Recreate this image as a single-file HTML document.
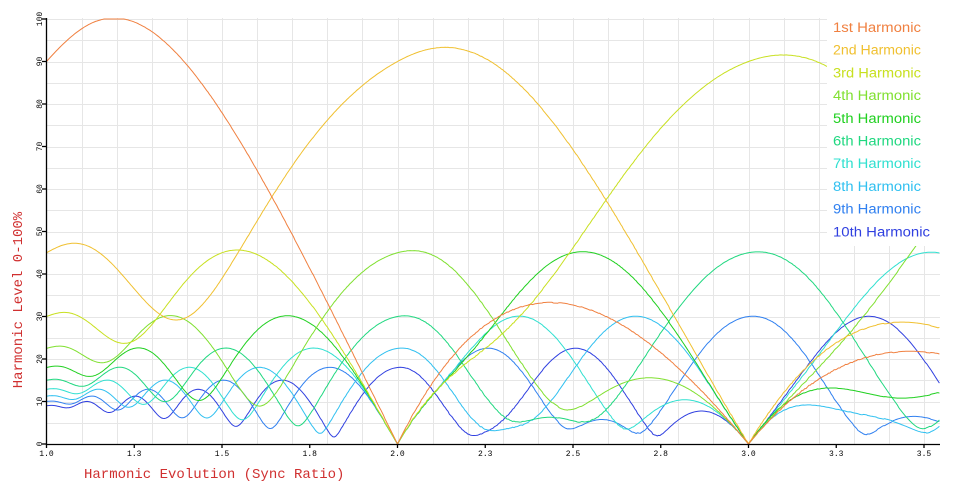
<!DOCTYPE html>
<html><head><meta charset="utf-8"><style>
html,body{margin:0;padding:0;background:#fff;width:960px;height:490px;overflow:hidden}
svg{display:block}
</style></head><body>
<svg id="s" width="960" height="490" xmlns="http://www.w3.org/2000/svg">
<g id="grid" stroke="#e6e6e6" stroke-width="1"></g>
<g id="curves" fill="none" stroke-width="1"></g>
<rect x="827" y="14" width="120" height="232" fill="#fff"/>
<g id="axes" stroke="#000" stroke-width="1.3">
<line x1="46.5" y1="18" x2="46.5" y2="445"/>
<line x1="46" y1="444.5" x2="940" y2="444.5"/>
</g>
<g id="ticks" font-family="Liberation Mono, monospace" font-size="8" fill="#000"></g>
<text x="84" y="478" font-family="Liberation Mono, monospace" font-size="14" fill="#d03030">Harmonic Evolution (Sync Ratio)</text>
<text transform="translate(22,300) rotate(-90)" text-anchor="middle" font-family="Liberation Mono, monospace" font-size="14" fill="#d03030">Harmonic Level 0-100%</text>
<g id="legend" font-family="Liberation Sans, sans-serif" font-size="13.5"></g>
</svg>
<script>
var cols=["#f08040","#f0c030","#c8e020","#80e030","#20d020","#20d880","#30e0d0","#30c0f0","#3080f0","#3040e0"];
var names=["1st","2nd","3rd","4th","5th","6th","7th","8th","9th","10th"];
var X=function(r){return 46.5+(r-1)*351;},Y=function(v){return 444-v*4.25;};
var NS="http://www.w3.org/2000/svg";
function el(p,t,a,txt){var e=document.createElementNS(NS,t);for(var k in a)e.setAttribute(k,a[k]);if(txt!=null)e.textContent=txt;p.appendChild(e);return e;}
var g=document.getElementById("grid");
for(var r=1.1;r<3.56;r+=0.1){var x=Math.round(X(r))+0.5;el(g,"line",{x1:x,y1:18,x2:x,y2:444});}
for(var v=5;v<=100;v+=5){var y=Math.round(Y(v))+0.5;el(g,"line",{x1:47,y1:y,x2:940,y2:y});}
var tk=document.getElementById("ticks"),ax=document.getElementById("axes");
for(var v=0;v<=100;v+=10){var y=Y(v);el(ax,"line",{x1:42,y1:y,x2:47,y2:y});
el(tk,"text",{transform:"translate(42,"+y+") rotate(-90)","text-anchor":"middle"},String(v));}
var labs=["1.0","1.3","1.5","1.8","2.0","2.3","2.5","2.8","3.0","3.3","3.5"];
for(var i=0;i<labs.length;i++){var x=X(1+i*0.25);el(ax,"line",{x1:x,y1:444,x2:x,y2:448});
el(tk,"text",{x:x,y:456,"text-anchor":"middle"},labs[i]);}
var lg=document.getElementById("legend");
for(var i=0;i<10;i++)el(lg,"text",{x:833,y:32+i*22.7,fill:cols[i],textLength:i==9?97:88,lengthAdjust:"spacingAndGlyphs"},names[i]+" Harmonic");
var N=3000,ct=[],st=[];
for(var n=1;n<=10;n++){var c=new Float64Array(N),s=new Float64Array(N);
for(var j=0;j<N;j++){var t=(j+0.5)/N;c[j]=Math.cos(2*Math.PI*n*t);s[j]=Math.sin(2*Math.PI*n*t);}ct.push(c);st.push(s);}
function amp(r){var sig=new Float64Array(N);for(var j=0;j<N;j++){var t=(j+0.5)/N,u=r*t;sig[j]=2*(u-Math.floor(u))-1;}
var out=[];for(var n=0;n<10;n++){var a=0,b=0,c=ct[n],s=st[n];for(var j=0;j<N;j++){a+=sig[j]*c[j];b+=sig[j]*s[j];}out.push(Math.sqrt(a*a+b*b)/N);}return out;}
var norm=90/amp(1)[0];
var pts=[[],[],[],[],[],[],[],[],[],[]];
for(var r=1;r<=3.545;r+=0.004){var a=amp(r);for(var n=0;n<10;n++)pts[n].push(X(r).toFixed(1)+","+Y(Math.min(100,a[n]*norm)).toFixed(1));}
var cv=document.getElementById("curves");
for(var n=9;n>=0;n--)el(cv,"polyline",{points:pts[n].join(" "),stroke:cols[n]});
</script>
</body></html>
